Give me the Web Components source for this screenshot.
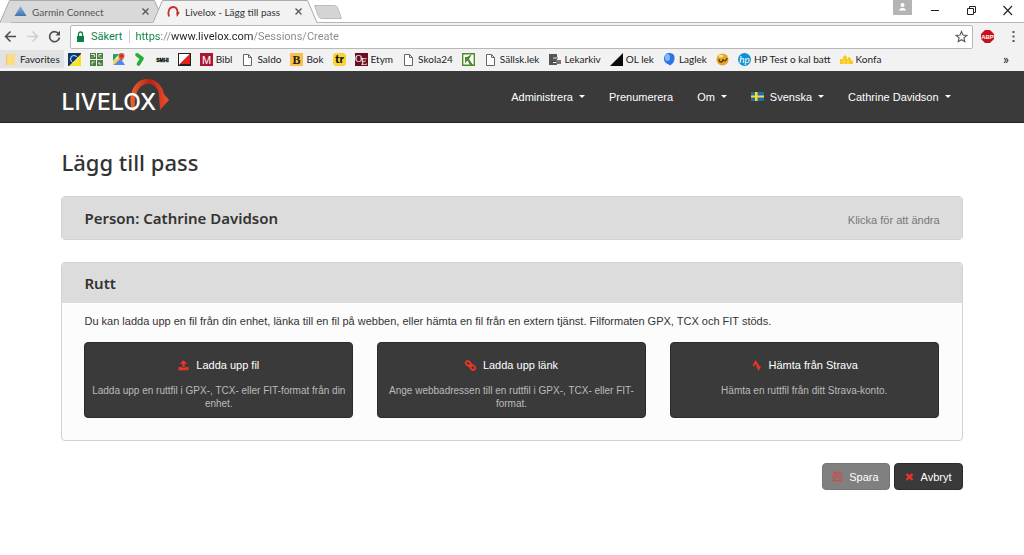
<!DOCTYPE html>
<html lang="sv">
<head>
<meta charset="utf-8">
<title>Livelox - Lägg till pass</title>
<style>
body{margin:0;background:#fff;font:11px/18px "Liberation Sans",Arial,sans-serif;color:#333}
</style>
</head>
<body>
<browser-frame>
  <browser-tab slot="tabs" icon="garmin" label="Garmin Connect"></browser-tab>
  <browser-tab slot="tabs" icon="livelox" label="Livelox - Lägg till pass" active></browser-tab>
  <book-mark icon="folder" label="Favorites" selected></book-mark>
  <book-mark icon="eye"></book-mark>
  <book-mark icon="grid"></book-mark>
  <book-mark icon="maps"></book-mark>
  <book-mark icon="chevron"></book-mark>
  <book-mark icon="smhi"></book-mark>
  <book-mark icon="control"></book-mark>
  <book-mark icon="m" label="Bibl"></book-mark>
  <book-mark icon="page" label="Saldo"></book-mark>
  <book-mark icon="b" label="Bok"></book-mark>
  <book-mark icon="tr"></book-mark>
  <book-mark icon="oe" label="Etym"></book-mark>
  <book-mark icon="page" label="Skola24"></book-mark>
  <book-mark icon="green"></book-mark>
  <book-mark icon="page" label="Sällsk.lek"></book-mark>
  <book-mark icon="archive" label="Lekarkiv"></book-mark>
  <book-mark icon="triangle" label="OL lek"></book-mark>
  <book-mark icon="blob" label="Laglek"></book-mark>
  <book-mark icon="gold"></book-mark>
  <book-mark icon="hp" label="HP Test o kal batt"></book-mark>
  <book-mark icon="crown" label="Konfa"></book-mark>
</browser-frame>
<site-header>
  <nav-item caret>Administrera</nav-item>
  <nav-item>Prenumerera</nav-item>
  <nav-item caret>Om</nav-item>
  <nav-item caret flag>Svenska</nav-item>
  <nav-item caret>Cathrine Davidson</nav-item>
</site-header>
<session-page>
  <fold-panel heading="Person: Cathrine Davidson" hint="Klicka för att ändra"></fold-panel>
  <fold-panel heading="Rutt" open>
    <route-sources></route-sources>
  </fold-panel>
  <action-button slot="actions" icon="floppy" label="Spara" disabled></action-button>
  <action-button slot="actions" icon="times" label="Avbryt"></action-button>
</session-page>

<script>
const svg = (w, h, body) => `<svg viewBox="0 0 ${w} ${h}" aria-hidden="true">${body}</svg>`;
const ICONS = {
  garmin: svg(13,13,'<defs><linearGradient id="a" x2="0" y2="1"><stop stop-color="#8db4dc"/><stop offset="1" stop-color="#3e74b0"/></linearGradient></defs><path d="M6.500 1 12.500 11H.5z" fill="url(#a)"/>'),
  livelox: svg(13,13,'<path d="M2 11.500C.3 6 2.500 2 6.500 2c3 0 4 3 4.200 6" fill="none" stroke="#c9302c" stroke-width="1.800"/><path d="M9.300 7.500l3.500-.2-3 4.700z" fill="#b2221c"/>'),
  folder: svg(13,13,'<path d="M2 1h9v11H2z" fill="#fbdc82"/><path d="M2 1h1v11H2z" fill="#efca62"/>'),
  eye: svg(13,13,'<path d="M0 0h13v13H0z" fill="#0b3a78"/><path d="M13 1v12H1z" fill="#f6e51b"/><circle cx="6" cy="6" r="3.500" fill="none" stroke="#dce9f5"/><path d="M1 12 12 1" stroke="#102a4a"/>'),
  grid: svg(13,13,'<path d="M0 0h6v6H0zM7 0h6v6H7zM0 7h6v6H0zM7 7h6v6H7z" fill="#4d7f42"/><path d="M1 1.500h3.500V4M11.500 1.500H9V4M2 11.500V9h2.500M11.500 11H9V9M2 3.500v1M11 4v1" fill="none" stroke="#dfeadb"/>'),
  maps: svg(13,13,'<path d="M1 1h11v11H1z" fill="#e8e8e8"/><path d="M1 1h6L1 8z" fill="#24a35a"/><path d="M1 12 8 5l5 7z" fill="#4a89f3"/><path d="M1 9 9 2l1 2-8 8z" fill="#fbcf3f"/><path d="M9.500 0A3 3 0 0 1 12.500 3c0 2-2 3-3 5-1-2-3-3-3-5a3 3 0 0 1 3-3z" fill="#de4a3c"/><circle cx="9.500" cy="3" r="1" fill="#8c2a22"/>'),
  chevron: svg(13,13,'<path d="M3 1.800 8 5.500 4.500 11" fill="none" stroke="#22b032" stroke-width="3.600" stroke-linejoin="round" stroke-linecap="round"/>'),
  smhi: svg(13,13,'<text x="6.500" y="8.500" text-anchor="middle" font-family="Liberation Sans" font-size="5" font-weight="700" stroke="#111" stroke-width=".3">SMHI</text>'),
  control: svg(13,13,'<path d="M0 0h13v13H0z" fill="#222"/><path d="M1 1h11L1 12z" fill="#fff"/><path d="M12 1v10H2z" fill="#e3211c"/>'),
  m: svg(13,13,'<path d="M0 0h13v13H0z" fill="#ab1632"/><text x="6.500" y="11" text-anchor="middle" font-family="Liberation Sans" font-size="11" fill="#fff">M</text>'),
  page: svg(13,13,'<path d="M2.500 1.500h5l3 3v8h-8zM7.500 1.500v3h3" fill="#fff" stroke="#666"/>'),
  b: svg(13,13,'<path d="M0 0h13v13H0z" fill="#f8bf4c"/><text x="6.500" y="11" text-anchor="middle" font-family="Liberation Serif" font-size="12" font-weight="700" fill="#2b1d0c">B</text>'),
  tr: svg(13,13,'<path d="M2 0h9l2 2v9l-2 2H2l-2-2V2z" fill="#fbd336"/><text x="6.500" y="10" text-anchor="middle" font-family="Lato" font-size="12" font-weight="900" fill="#111">tr</text>'),
  oe: svg(13,13,'<path d="M0 0h13v13H0z" fill="#6b0d20"/><text x="0" y="9" font-family="Liberation Serif" font-size="10" fill="#fff">O</text><text x="6" y="12" font-family="Liberation Serif" font-size="10" fill="#fff">E</text>'),
  green: svg(13,13,'<path d="M.7.7h11.600v11.600H.7z" fill="#fff" stroke="#4c8b2b" stroke-width="1.400"/><path d="M3 4h2l5-3L7 6l4 6H8L5.500 7.500 3 10z" fill="#4c8b2b"/>'),
  archive: svg(13,13,'<path d="M1 1h8v3H5v2h4v2H5v2h4v2H1z" fill="#555"/><path d="M8 7h5v4H8z" fill="#777"/><path d="M3 5h7M3 8.500h5" stroke="#444"/>'),
  triangle: svg(13,13,'<path d="M13 0v13H0z" fill="#0a0a0a"/>'),
  blob: svg(13,13,'<path d="M6 0c4 0 6 2 5.500 6S9 11 7 12.500c0-1-3-1-5-3.500S1 0 6 0z" fill="#2d74e8"/><ellipse cx="4.500" cy="4.500" rx="2.500" ry="3.500" fill="#88b9f8"/>'),
  gold: svg(13,13,'<circle cx="6.500" cy="6.500" r="6" fill="#e2a62a"/><path d="M3 6c0 4 4 4 4 0m0 0c0 3 4 2 4-1" fill="none" stroke="#6c4209" stroke-width="1.400"/><ellipse cx="5" cy="3" rx="2.500" ry="1.500" fill="#fbe084"/>'),
  hp: svg(13,13,'<circle cx="6.500" cy="6.500" r="6.500" fill="#0e92d2"/><text x="6.500" y="9.500" text-anchor="middle" font-family="Lato" font-size="10" font-style="italic" fill="#fff">hp</text>'),
  crown: svg(13,13,'<path d="M0 6h3V4l2-2 2 2v2h1V4l3 1v2l2 1v3H0z" fill="#fbc91b"/><path d="M4 7v4M8 8v3" stroke="#fbe58a"/>'),
  back: svg(13,13,'<path d="M12 6.500H2M6.500 1.500l-5 5 5 5" fill="none" stroke="#4d4d4d" stroke-width="1.500"/>'),
  forward: svg(13,13,'<path d="M1 6.500h10M6.500 1.500l5 5-5 5" fill="none" stroke="#cfcfcf" stroke-width="1.500"/>'),
  reload: svg(13,13,'<path d="M10.800 4A5 5 0 1 0 11.500 7.500" fill="none" stroke="#4d4d4d" stroke-width="1.600"/><path d="M12 .8V5.500H7.500z" fill="#4d4d4d"/>'),
  lock: svg(13,13,'<path d="M2 6h7v6H2z" fill="#0b8043"/><path d="M3.500 6V4a2 2 0 0 1 4 0v2" fill="none" stroke="#0b8043" stroke-width="1.300"/>'),
  star: svg(13,13,'<path d="M6.500 1.500 8 5.100l3.900.3-3 2.500.9 3.800-3.300-2-3.300 2 .9-3.800-3-2.500L5 5.100z" fill="none" stroke="#555" stroke-width="1.100"/>'),
  abp: svg(13,13,'<path d="M4 0h5l4 4v5l-4 4H4L0 9V4z" fill="#c8101c"/><text x="6.500" y="8.800" text-anchor="middle" font-family="Liberation Sans" font-size="6" font-weight="700" fill="#fff">ABP</text>'),
  dots: svg(13,13,'<path d="M5.500 1h2v2h-2zM5.500 5.500h2v2h-2zM5.500 10h2v2h-2z" fill="#555"/>'),
  close: svg(13,13,'<path d="m3.500 3.500 6 6m0-6-6 6" stroke="#555" stroke-width="1.300"/>'),
  min: svg(13,13,'<path d="M2 6.500h8" stroke="#222"/>'),
  restore: svg(13,13,'<path d="M2.500 4.500h6v6h-6zM4.500 4.500v-2h6v6h-2" fill="none" stroke="#222"/>'),
  quit: svg(13,13,'<path d="m2.500 2 8.500 9m0-9-8.500 9" stroke="#222" stroke-width="1.100"/>'),
  user: svg(19,15,'<path d="M0 0h19v15H0z" fill="#b4b4b4"/><circle cx="9.500" cy="5" r="2" fill="#fff"/><path d="M6 10.500c0-3.500 7-3.500 7 0z" fill="#fff"/>'),
  flag: svg(13,9,'<path d="M0 0h13v9H0z" fill="#2468ab"/><path d="M4 0h2.500v9H4zM0 3.500h13v2H0z" fill="#f7df29"/>'),
  upload: svg(1792,1792,'<path fill="#ee3524" d="M1344 1472q0-26-19-45t-45-19-45 19-19 45 19 45 45 19 45-19 19-45zm256 0q0-26-19-45t-45-19-45 19-19 45 19 45 45 19 45-19 19-45zm128-224v320q0 40-28 68t-68 28H160q-40 0-68-28t-28-68v-320q0-40 28-68t68-28h427q21 56 70 92t111 36h256q61 0 110-36t71-92h427q40 0 68 28t28 68zm-325-648q-17 40-59 40h-256v448q0 26-19 45t-45 19H768q-26 0-45-19t-19-45V640H448q-42 0-59-40-17-39 14-69L851 83q18-19 45-19t45 19l448 448q31 30 14 69z"/>'),
  link: svg(12,12,'<g fill="none" stroke="#ee3524" stroke-width="2" transform="rotate(42 6 6)"><rect x="-.2" y="3.900" width="5.700" height="4.200" rx="2"/><rect x="6.500" y="3.900" width="5.700" height="4.200" rx="2"/><path d="M4 6h4" stroke-width="1.300"/></g>'),
  strava: svg(12,12,'<path d="M5 0 9.500 7H7L5 4.300 3.900 6.500H1.500z" fill="#ee3524"/><path d="M5.500 6.500h2l.8 1.500 1-1.500h1.700L8.300 12z" fill="#ee3524"/>'),
  floppy: svg(12,12,'<path d="M1.500 1.500h7l2 2v7h-9zM3.500 1.500v3h4v-3M3.500 10.500v-4h5v4" fill="none" stroke="#ee3524" stroke-width="1.100"/>'),
  times: svg(1792,1792,'<path fill="#ee3524" d="M1490 1322q0 40-28 68l-136 136q-28 28-68 28t-68-28l-294-294-294 294q-28 28-68 28t-68-28l-136-136q-28-28-28-68t28-68l294-294-294-294q-28-28-28-68t28-68l136-136q28-28 68-28t68 28l294 294 294-294q28-28 68-28t68 28l136 136q28 28 28 68t-28 68l-294 294 294 294q28 28 28 68z"/>')
};

class Base extends HTMLElement {
  connectedCallback() {
    if (this.shadowRoot) return;
    this.attachShadow({mode: 'open'}).innerHTML =
      `<style>*{box-sizing:border-box}button{font:inherit;color:inherit;cursor:pointer;border:0;background:none;padding:0}a{color:inherit;text-decoration:none}${this.css()}</style>${this.html()}`;
  }
  get label() { return this.getAttribute('label') || ''; }
  get icon() { return this.getAttribute('icon'); }
}

customElements.define('ui-icon', class extends Base {
  css() { return ':host{display:block;flex:none;width:var(--icon,13px);height:var(--icon,13px)}:host([name=user]){width:19px;height:15px}:host([name=flag]){height:9px}svg{display:block;width:100%;height:100%;overflow:visible}'; }
  html() { return ICONS[this.getAttribute('name')]; }
});

customElements.define('browser-tab', class extends Base {
  css() { return `
    :host{display:flex;width:164px;height:23px;margin-right:-11px;flex:none;--fill:#d9d9d9}
    :host([active]){--fill:#f2f2f2;position:relative}
    .edge{width:11px;height:23px;flex:none;display:block}
    .edge path{fill:var(--fill);stroke:#aaa}
    .mid{flex:1;min-width:0;display:flex;align-items:center;background:var(--fill);border-top:1px solid #aaa;border-bottom:1px solid #b5b5b5}
    :host([active]) .mid{border-bottom-color:#f2f2f2}
    .label{margin-left:5px;flex:1;color:#555;white-space:nowrap}
    :host([active]) .label{color:#333}
    .mid ui-icon:first-child{margin-left:3px}
    button{margin-right:1px}`; }
  html() { return `
    <svg class="edge" viewBox="0 0 11 23"><path d="M0 22.500 9.500.5H12V24H0"/></svg>
    <div class="mid" role="tab"><ui-icon name="${this.icon}"></ui-icon><span class="label">${this.label}</span><button aria-label="Stäng flik"><ui-icon name="close"></ui-icon></button></div>
    <svg class="edge" viewBox="0 0 11 23"><path d="M-1 .5H1.500L11 22.500V24H-1"/></svg>`; }
});

customElements.define('book-mark', class extends Base {
  css() { return `
    :host{display:block;flex:none}
    a{display:flex;align-items:center;gap:3px;height:18px;padding:0 5px 0 4px;white-space:nowrap}
    :host([selected]) a{background:#e2e2e2;padding-right:4px}`; }
  html() { return `<a href="#" aria-label="${this.label || this.icon}"><ui-icon name="${this.icon}"></ui-icon>${this.label ? `<span>${this.label}</span>` : ''}</a>`; }
});

customElements.define('browser-frame', class extends Base {
  css() { return `
    :host{display:block;background:#f2f2f2;font:10px/16px Lato,"Noto Sans",sans-serif;color:#222}
    .strip{display:flex;height:23px;background:linear-gradient(#b5b5b5,#b5b5b5) 0 100%/100% 1px no-repeat #fff}
    .new{width:29px;height:14px;margin:5px 0 0 7px}
    .new svg{display:block}
    .window{margin-left:auto;display:flex;align-items:center;gap:23px;padding-right:10px;height:21px}
    .window .account{align-self:flex-start;margin-right:-6px}
    .bar{display:flex;align-items:center;height:27px;padding:0 4px;gap:9px}
    .field{flex:1;display:flex;align-items:center;height:24px;margin:0 -1px 0 0;padding:0 4px;background:#fff;border:1px solid #b8b8b8;border-radius:2px}
    .secure{color:#0b8043;font:11px/13px Roboto,sans-serif;padding:0 7px 0 3px;margin-right:5px;border-right:1px solid #ccc}
    input{flex:1;min-width:0;border:0;outline:0;padding:0;font:11px/18px Roboto,sans-serif;height:18px;color:transparent;
      background:linear-gradient(90deg,#0b8043 27px,#888 27px 36px,#222 36px 118px,#888 118px);-webkit-background-clip:text;background-clip:text}
    .marks{display:flex;align-items:center;padding-bottom:3px}
    .marks button{margin-left:auto;padding-right:15px;font-size:14px}
    .extra{margin-right:4px}`; }
  html() { return `
    <div class="strip" role="tablist"><slot name="tabs"></slot>
      <button class="new" aria-label="Ny flik"><svg width="29" height="14"><path d="M1.500.5h20q2 0 3 2l4 11h-20q-2 0-3-2z" fill="#d4d4d4" stroke="#bbb"/></svg></button>
      <div class="window"><button class="account" aria-label="Konto"><ui-icon name="user"></ui-icon></button><button aria-label="Minimera"><ui-icon name="min"></ui-icon></button><button aria-label="Återställ"><ui-icon name="restore"></ui-icon></button><button aria-label="Stäng"><ui-icon name="quit"></ui-icon></button></div>
    </div>
    <div class="bar">
      <button aria-label="Bakåt"><ui-icon name="back"></ui-icon></button><button aria-label="Framåt"><ui-icon name="forward"></ui-icon></button><button aria-label="Ladda om"><ui-icon name="reload"></ui-icon></button>
      <div class="field"><ui-icon name="lock"></ui-icon><label class="secure" for="url">Säkert</label><input id="url" type="text" value="https://www.livelox.com/Sessions/Create"><button aria-label="Bokmärk"><ui-icon name="star"></ui-icon></button></div>
      <button class="extra" aria-label="Adblock Plus"><ui-icon name="abp"></ui-icon></button><button aria-label="Meny"><ui-icon name="dots"></ui-icon></button>
    </div>
    <div class="marks"><slot></slot><button aria-label="Fler bokmärken">»</button></div>`; }
});

customElements.define('nav-item', class extends Base {
  css() { return `
    :host{display:block}
    a{display:flex;align-items:center;padding:0 12px;white-space:nowrap}
    ui-icon{margin-right:6px}
    .caret{margin-left:6px;border:3px solid transparent;border-top-color:#fff;border-bottom:0}`; }
  html() { return `<a href="#">${this.hasAttribute('flag') ? '<ui-icon name="flag"></ui-icon>' : ''}<slot></slot>${this.hasAttribute('caret') ? '<span class="caret"></span>' : ''}</a>`; }
});

customElements.define('site-header', class extends Base {
  css() { return `
    :host{display:block;background:#3a3a3a;border-bottom:1px solid #222;color:#fff;padding:0 6%}
    header{display:flex;justify-content:space-between;align-items:center;height:51px}
    .logo{position:relative;font:500 23px/24px Inter,sans-serif;padding-top:10px}
    .logo svg{position:absolute;left:68px;top:-1px;width:42px;height:36px}
    .logo span{position:relative}
    nav{display:flex}`; }
  html() { return `<header>
    <a class="logo" href="#"><svg viewBox="0 0 42 36" aria-hidden="true"><defs><linearGradient id="g"><stop stop-color="#f0642a"/><stop offset=".5" stop-color="#b8231a"/><stop offset="1" stop-color="#f0502a"/></linearGradient></defs>
      <path d="M3 32C-2 15 6 0 18 0c9 0 15 6 17 15l5 6-9 10-1-15C29 8 24 4 17 5 8 7 5 18 6 32z" fill="url(#g)"/></svg><span>LIVELOX</span></a>
    <nav><slot></slot></nav></header>`; }
});

customElements.define('fold-panel', class extends Base {
  css() { return `
    :host{display:block;margin-bottom:22px;border:1px solid #d2d2d2;border-radius:4px;background:#fcfcfc;overflow:hidden}
    .head{display:flex;justify-content:space-between;align-items:center;height:42px;padding:0 22px;background:#dcdcdc}
    :host([open]) .head{height:40px}
    h2{margin:0;font:600 15px/22px "Noto Sans",sans-serif;color:#333}
    .hint{color:#777;padding-top:3px}`; }
  html() { const hint = this.getAttribute('hint'); return `<div class="head"><h2>${this.getAttribute('heading')}</h2>${hint ? `<button class="hint">${hint}</button>` : ''}</div><slot></slot>`; }
});

customElements.define('source-tile', class extends Base {
  css() { return `
    :host{display:block;--icon:11px}
    button{display:flex;flex-direction:column;align-items:center;width:100%;height:76px;padding:13px 4px 0;background:#3a3a3a;border:1px solid #2b2b2b;border-radius:4px;color:#fff}
    .title{display:flex;align-items:center;gap:7px;margin-bottom:10px}
    .note{font-size:10px;line-height:13px;color:#bbb;text-align:center}`; }
  html() { return `<button><span class="title"><ui-icon name="${this.icon}"></ui-icon>${this.label}</span><span class="note"><slot></slot></span></button>`; }
});

customElements.define('route-sources', class extends Base {
  css() { return `
    :host{display:block;padding:9px 23px 22px 22px}
    p{margin:0 0 12px}
    .tiles{display:grid;grid-template-columns:repeat(3,1fr);gap:24px}`; }
  html() { return `<p>Du kan ladda upp en fil från din enhet, länka till en fil på webben, eller hämta en fil från en extern tjänst. Filformaten GPX, TCX och FIT stöds.</p>
    <div class="tiles">
      <source-tile icon="upload" label="Ladda upp fil">Ladda upp en ruttfil i GPX-, TCX- eller FIT-format från din enhet.</source-tile>
      <source-tile icon="link" label="Ladda upp länk">Ange webbadressen till en ruttfil i GPX-, TCX- eller FIT-format.</source-tile>
      <source-tile icon="strava" label="Hämta från Strava">Hämta en ruttfil från ditt Strava-konto.</source-tile>
    </div>`; }
});

customElements.define('action-button', class extends Base {
  css() { return `
    :host{display:block;--icon:11px}
    button{display:flex;align-items:center;gap:6px;height:27px;padding:0 10px 0 9px;background:#3a3a3a;border:1px solid #2b2b2b;border-radius:4px;color:#fff}
    button:disabled{background:#808080;border-color:#757575}
    button:disabled ui-icon{opacity:.65}`; }
  html() { return `<button ${this.hasAttribute('disabled') ? 'disabled' : ''}><ui-icon name="${this.icon}"></ui-icon>${this.label}</button>`; }
});

customElements.define('session-page', class extends Base {
  css() { return `
    :host{display:block;padding:24px 6% 40px}
    h1{margin:0 0 19px;font:500 22px/30px "Noto Sans",sans-serif;color:#333}
    .actions{display:flex;justify-content:flex-end;gap:4px}`; }
  html() { return '<main><h1>Lägg till pass</h1><slot></slot><div class="actions"><slot name="actions"></slot></div></main>'; }
});
</script>
</body>
</html>
